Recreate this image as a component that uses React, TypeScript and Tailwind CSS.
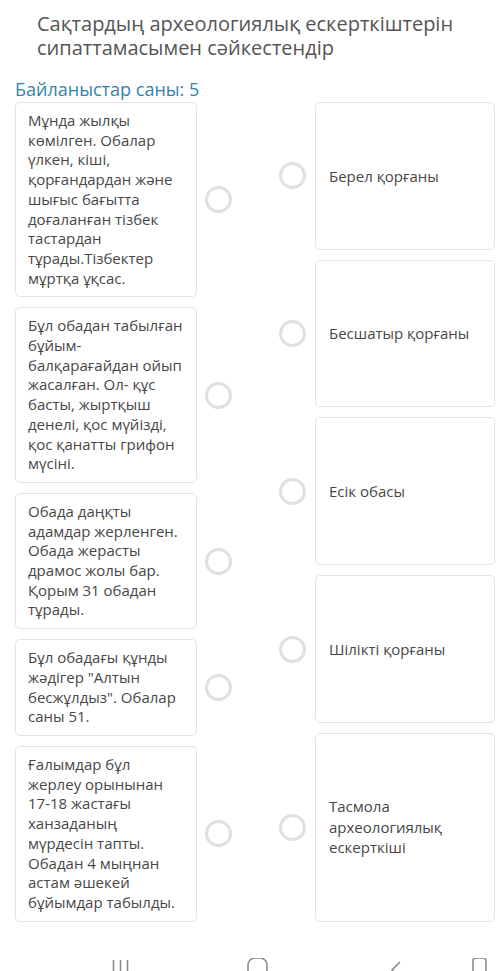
const leftItems = [
  'Мұнда жылқы көмілген. Обалар үлкен, кіші, қорғандардан және шығыс бағытта доғаланған тізбек тастардан тұрады.Тізбектер мұртқа ұқсас.',
  'Бұл обадан табылған бұйым-балқарағайдан ойып жасалған. Ол- құс басты, жыртқыш денелі, қос мүйізді, қос қанатты грифон мүсіні.',
  'Обада даңқты адамдар жерленген. Обада жерасты драмос жолы бар. Қорым 31 обадан тұрады.',
  'Бұл обадағы құнды жәдігер "Алтын бесжұлдыз". Обалар саны 51.',
  'Ғалымдар бұл жерлеу орынынан 17-18 жастағы ханзаданың мүрдесін тапты. Обадан 4 мыңнан астам әшекей бұйымдар табылды.',
]

const rightItems = [
  'Берел қорғаны',
  'Бесшатыр қорғаны',
  'Есік обасы',
  'Шілікті қорғаны',
  'Тасмола археологиялық ескерткіші',
]

const Dot: React.FC = () => (
  <div className="h-[27px] w-[27px] shrink-0 rounded-full border-[3px] border-[#e0e0e0] bg-white" />
)

export default function App() {
  return (
    <div
      className="flex h-[971px] flex-col overflow-hidden bg-white"
      style={{ fontFamily: '"Open Sans", "Noto Sans", sans-serif' }}
    >
      <h1 className="pl-[37px] pr-[20px] pt-[12px] text-[20px] font-normal leading-[24px] text-[#555555]">
        Сақтардың археологиялық ескерткіштерін сипаттамасымен сәйкестендір
      </h1>

      <p className="mt-[17px] pl-[15px] text-[18px] leading-[24px] text-[#3484a9]">
        Байланыстар саны: 5
      </p>

      <div className="mt-[1px] flex justify-between pl-[15px] pr-[5px]">
        <div className="flex w-[217px] flex-col gap-[10px]">
          {leftItems.map((text) => (
            <div key={text} className="flex items-center">
              <div className="w-[182px] shrink-0 rounded-[5px] border-[1.5px] border-[#e3e3e3] px-[12px] py-[8px] text-[15px] leading-[19.7px] text-[#474747]">
                {text}
              </div>
              <div className="ml-[8px]">
                <Dot />
              </div>
            </div>
          ))}
        </div>

        <div className="flex w-[216px] flex-col gap-[10px]">
          {rightItems.map((text) => (
            <div key={text} className="flex flex-auto items-center">
              <Dot />
              <div className="ml-[9px] flex h-full w-[181px] items-center self-stretch rounded-[5px] border-[1.5px] border-[#e3e3e3] px-[13px] py-[7px] text-[15px] leading-[20.5px] text-[#474747]">
                <span className="max-w-[148px]">{text}</span>
              </div>
            </div>
          ))}
        </div>
      </div>

      {/* system nav bar, cut off by the screenshot */}
      <div className="mt-auto flex h-[13px] items-start overflow-hidden pl-[112px] text-[#8a8a8a]">
        <svg width="17" height="20" viewBox="0 0 17 20" fill="none" stroke="currentColor" strokeWidth="1.6">
          <path d="M1.5 2v16M8.5 2v16M15.5 2v16" />
        </svg>
        <svg className="ml-[118px] -mt-[1px]" width="21" height="22" viewBox="0 0 21 22" fill="none" stroke="currentColor" strokeWidth="1.6">
          <rect x="1" y="1" width="19" height="19" rx="7" />
        </svg>
        <svg className="ml-[122px] mt-[3px]" width="12" height="20" viewBox="0 0 12 20" fill="none" stroke="currentColor" strokeWidth="1.6">
          <path d="M10 1 2 9l8 8" />
        </svg>
        <svg className="ml-[70px] -mt-[1px]" width="15" height="22" viewBox="0 0 15 22" fill="none" stroke="currentColor" strokeWidth="1.6">
          <rect x="1" y="1" width="13" height="19" rx="3" />
        </svg>
      </div>
    </div>
  )
}
